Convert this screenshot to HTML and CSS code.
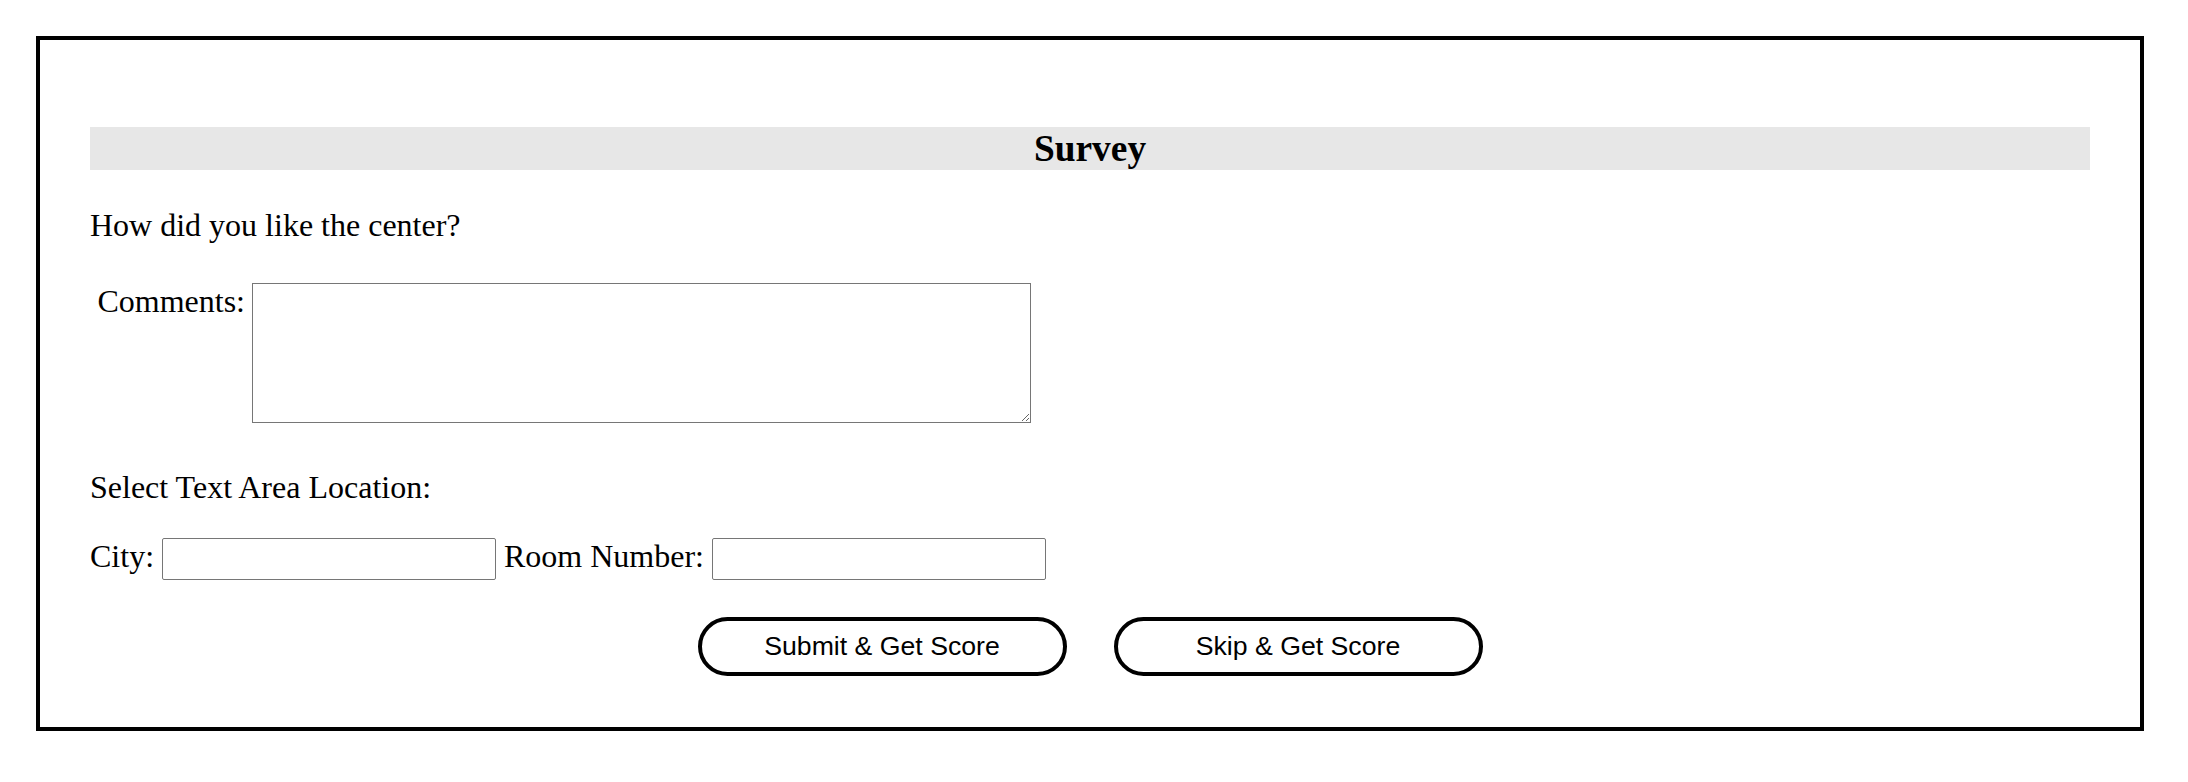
FILE: index.html
```html
<!DOCTYPE html>
<html lang="en">
<head>
<meta charset="utf-8">
<title>Survey</title>
<link rel="stylesheet" href="styles.css">
</head>
<body>
<div class="survey">
  <h3 class="survey-title">Survey</h3>
  <p class="question">How did you like the center?</p>
  <div class="comments-row">
    <label class="comments-label" for="comments">Comments:</label>
    <textarea id="comments" class="comments-box"></textarea>
  </div>
  <p class="location-title">Select Text Area Location:</p>
  <div class="location-row">
    <label class="field-label" for="city">City:</label>
    <input id="city" class="field-input" type="text">
    <label class="field-label" for="room">Room Number:</label>
    <input id="room" class="field-input" type="text">
  </div>
  <div class="actions">
    <button class="pill-btn" type="button">Submit &amp; Get Score</button>
    <button class="pill-btn" type="button">Skip &amp; Get Score</button>
  </div>
</div>
</body>
</html>
```

FILE: styles.css
```css
html, body {
  margin: 0;
  padding: 0;
  background: #ffffff;
}

body {
  font-family: "Liberation Serif", "Times New Roman", serif;
  font-size: 32px;
  color: #000000;
}

.survey {
  box-sizing: border-box;
  width: 2108px;
  margin: 36px 0 0 36px;
  border: 4px solid #000000;
  padding: 50px 50px 51px 50px;
}

.survey-title {
  margin: 37px 0 0 0;
  height: 43px;
  line-height: 43px;
  font-size: 37.4px;
  font-weight: bold;
  text-align: center;
  background: #e7e7e7;
}

.question {
  margin: 37px 0 0 0;
  line-height: 37px;
}

.comments-row {
  display: flex;
  align-items: flex-start;
  gap: 7px;
  margin-top: 39px;
}

.comments-label {
  width: 155px;
  text-align: right;
  line-height: 37px;
}

.comments-box {
  box-sizing: border-box;
  width: 779px;
  height: 140px;
  margin: 0;
  border: 1px solid #767676;
  border-radius: 0;
  padding: 2px;
  font-family: "Liberation Mono", monospace;
  font-size: 26px;
}

.location-title {
  margin: 46px 0 0 0;
  line-height: 37px;
}

.location-row {
  display: flex;
  align-items: flex-start;
  gap: 8px;
  margin-top: 32px;
}

.field-label {
  line-height: 37px;
}

.field-input {
  box-sizing: border-box;
  width: 334px;
  height: 42px;
  margin: 0;
  border: 1px solid #767676;
  border-radius: 2px;
  padding: 1px 4px;
  font-family: "Liberation Sans", Arial, sans-serif;
  font-size: 26px;
}

.actions {
  display: flex;
  justify-content: center;
  gap: 47px;
  margin-top: 37px;
}

.pill-btn {
  box-sizing: border-box;
  width: 369px;
  height: 59px;
  margin: 0;
  padding: 0;
  border: 4px solid #000000;
  border-radius: 30px;
  background: #ffffff;
  color: #000000;
  font-family: "Liberation Sans", Arial, sans-serif;
  font-size: 26.67px;
  line-height: 1;
  cursor: pointer;
}
```
